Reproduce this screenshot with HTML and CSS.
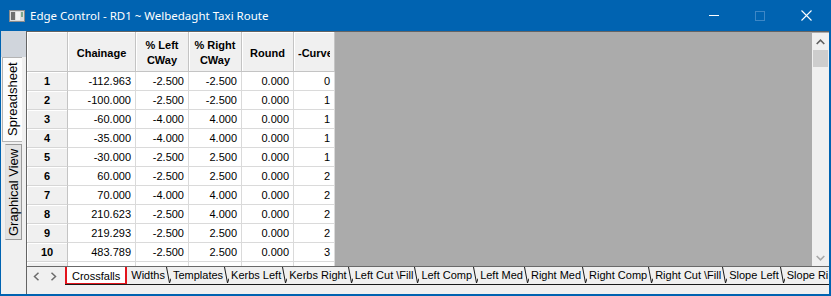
FILE: index.html
```html
<!DOCTYPE html>
<html lang="en">
<head>
  <meta charset="UTF-8">
  <title>Edge Control</title>
  <link rel="stylesheet" href="styles.css">
</head>
<body>
  <div class="window">
    <div class="titlebar">
      <svg class="app-icon" width="16" height="12" viewBox="0 0 16 12">
        <rect x="0.5" y="0.5" width="15" height="11" fill="#dcdcdc" stroke="#8c8c8c"/>
        <rect x="2" y="2" width="4" height="8" fill="#6f6f6f"/>
        <rect x="7" y="2" width="4" height="8" fill="#f4f4f4"/>
        <rect x="12" y="2" width="2" height="5" fill="#7fa88c"/>
      </svg>
      <span class="title">Edge Control - RD1 ~ Welbedaght Taxi Route</span>
      <div class="controls">
        <span class="ctl"><svg width="10" height="1"><rect width="10" height="1" fill="#fff"/></svg></span>
        <span class="ctl"><svg width="10" height="10"><rect x="0.5" y="0.5" width="9" height="9" fill="none" stroke="#3d87c6"/></svg></span>
        <span class="ctl"><svg width="11" height="11"><path d="M0.5 0.5 L10.5 10.5 M10.5 0.5 L0.5 10.5" stroke="#fff" stroke-width="1.1"/></svg></span>
      </div>
    </div>

    <div class="client">
      <div class="side">
        <div class="side-top"></div>
        <div class="vtab active">Spreadsheet</div>
        <div class="vtab">Graphical View</div>
      </div>

      <div class="sheet">
        <div class="grid-area">
          <table class="grid">
            <colgroup>
              <col style="width:41px"><col style="width:68px"><col style="width:53px">
              <col style="width:53px"><col style="width:52px"><col style="width:41px">
            </colgroup>
            <thead>
              <tr>
                <th class="corner"></th>
                <th>Chainage</th>
                <th>% Left<br>CWay</th>
                <th>% Right<br>CWay</th>
                <th>Round</th>
                <th class="cut"><span>-Curve</span></th>
              </tr>
            </thead>
            <tbody>
              <tr><th>1</th><td>-112.963</td><td>-2.500</td><td>-2.500</td><td>0.000</td><td>0</td></tr>
              <tr><th>2</th><td>-100.000</td><td>-2.500</td><td>-2.500</td><td>0.000</td><td>1</td></tr>
              <tr><th>3</th><td>-60.000</td><td>-4.000</td><td>4.000</td><td>0.000</td><td>1</td></tr>
              <tr><th>4</th><td>-35.000</td><td>-4.000</td><td>4.000</td><td>0.000</td><td>1</td></tr>
              <tr><th>5</th><td>-30.000</td><td>-2.500</td><td>2.500</td><td>0.000</td><td>1</td></tr>
              <tr><th>6</th><td>60.000</td><td>-2.500</td><td>2.500</td><td>0.000</td><td>2</td></tr>
              <tr><th>7</th><td>70.000</td><td>-4.000</td><td>4.000</td><td>0.000</td><td>2</td></tr>
              <tr><th>8</th><td>210.623</td><td>-2.500</td><td>4.000</td><td>0.000</td><td>2</td></tr>
              <tr><th>9</th><td>219.293</td><td>-2.500</td><td>2.500</td><td>0.000</td><td>2</td></tr>
              <tr><th>10</th><td>483.789</td><td>-2.500</td><td>2.500</td><td>0.000</td><td>3</td></tr>
              <tr><th></th><td></td><td></td><td></td><td></td><td></td></tr>
            </tbody>
          </table>
          <div class="empty"></div>
          <div class="vscroll">
            <div class="sb-btn"><svg width="9" height="6"><path d="M0.7 5 L4.5 1.2 L8.3 5" fill="none" stroke="#606060" stroke-width="1.6"/></svg></div>
            <div class="sb-thumb"></div>
            <div class="sb-track"></div>
            <div class="sb-btn"><svg width="9" height="6"><path d="M0.7 1 L4.5 4.8 L8.3 1" fill="none" stroke="#a8a8a8" stroke-width="1.6"/></svg></div>
          </div>
        </div>

        <div class="tabstrip">
          <div class="nav">
            <svg width="7" height="9"><path d="M5.5 0.8 L1.5 4.5 L5.5 8.2" fill="none" stroke="#6b6b6b" stroke-width="1.5"/></svg>
            <svg width="7" height="9"><path d="M1.5 0.8 L5.5 4.5 L1.5 8.2" fill="none" stroke="#6b6b6b" stroke-width="1.5"/></svg>
          </div>
          <div class="tabs">
            <span class="tab active">Crossfalls</span>
            <span class="tab">Widths</span>
            <svg class="sep" width="5" height="17"><path d="M0.5 0 L3.5 16 L5 11.5" fill="none" stroke="#1a1a1a"/></svg>
            <span class="tab">Templates</span>
            <svg class="sep" width="5" height="17"><path d="M0.5 0 L3.5 16 L5 11.5" fill="none" stroke="#1a1a1a"/></svg>
            <span class="tab">Kerbs Left</span>
            <svg class="sep" width="5" height="17"><path d="M0.5 0 L3.5 16 L5 11.5" fill="none" stroke="#1a1a1a"/></svg>
            <span class="tab">Kerbs Right</span>
            <svg class="sep" width="5" height="17"><path d="M0.5 0 L3.5 16 L5 11.5" fill="none" stroke="#1a1a1a"/></svg>
            <span class="tab">Left Cut \Fill</span>
            <svg class="sep" width="5" height="17"><path d="M0.5 0 L3.5 16 L5 11.5" fill="none" stroke="#1a1a1a"/></svg>
            <span class="tab">Left Comp</span>
            <svg class="sep" width="5" height="17"><path d="M0.5 0 L3.5 16 L5 11.5" fill="none" stroke="#1a1a1a"/></svg>
            <span class="tab">Left Med</span>
            <svg class="sep" width="5" height="17"><path d="M0.5 0 L3.5 16 L5 11.5" fill="none" stroke="#1a1a1a"/></svg>
            <span class="tab">Right Med</span>
            <svg class="sep" width="5" height="17"><path d="M0.5 0 L3.5 16 L5 11.5" fill="none" stroke="#1a1a1a"/></svg>
            <span class="tab">Right Comp</span>
            <svg class="sep" width="5" height="17"><path d="M0.5 0 L3.5 16 L5 11.5" fill="none" stroke="#1a1a1a"/></svg>
            <span class="tab">Right Cut \Fill</span>
            <svg class="sep" width="5" height="17"><path d="M0.5 0 L3.5 16 L5 11.5" fill="none" stroke="#1a1a1a"/></svg>
            <span class="tab">Slope Left</span>
            <svg class="sep" width="5" height="17"><path d="M0.5 0 L3.5 16 L5 11.5" fill="none" stroke="#1a1a1a"/></svg>
            <span class="tab">Slope Ri</span>
          </div>
        </div>
        <div class="sheet-foot"></div>
      </div>
    </div>
  </div>
</body>
</html>
```

FILE: styles.css
```css
body {
  margin: 0;
  font-family: "Liberation Sans", Arial, sans-serif;
  color: #000;
}

.window {
  width: 831px;
  height: 296px;
  box-sizing: border-box;
  padding: 0 2px 2px 1px;
  background: #0063b1;
  display: flex;
  flex-direction: column;
  overflow: hidden;
}

/* title bar */
.titlebar {
  height: 31px;
  flex: none;
  display: flex;
  align-items: center;
  color: #fff;
}

.app-icon {
  margin-left: 8px;
  margin-top: 1px;
}

.title {
  margin-left: 5px;
  font-family: "Noto Sans", sans-serif;
  font-size: 11.5px;
}

.controls {
  margin-left: auto;
  display: flex;
  height: 100%;
}

.ctl {
  width: 46px;
  display: flex;
  align-items: center;
  justify-content: center;
}

/* client */
.client {
  flex: 1;
  min-height: 0;
  display: flex;
  background: #f0f0f0;
}

.side {
  width: 25px;
  flex: none;
  display: flex;
  flex-direction: column;
}

.side-top {
  height: 26px;
  background: #d0d5dc;
}

.vtab {
  writing-mode: vertical-rl;
  transform: rotate(180deg);
  font-size: 13px;
  display: flex;
  align-items: center;
  justify-content: center;
  box-sizing: border-box;
  width: 17px;
  height: 96px;
  margin-left: 4px;
  margin-top: 2px;
  background: #e3e3e3;
  border: 1px solid #9a9a9a;
  border-right-color: #dcdcdc;
}

.vtab.active {
  width: 20px;
  height: 85px;
  margin-left: 1px;
  margin-top: 0;
  background: #fcfcfc;
  border-color: #b4b4b4;
  border-left: none;
}

.sheet {
  flex: 1;
  min-width: 0;
  display: flex;
  flex-direction: column;
  border-left: 1px solid #646464;
  border-top: 1px solid #646464;
}

.grid-area {
  height: 234px;
  flex: none;
  display: flex;
  background: #ababab;
  overflow: hidden;
}

/* spreadsheet */
.grid {
  flex: none;
  table-layout: fixed;
  border-collapse: separate;
  border-spacing: 0;
  width: 308px;
  font-size: 11px;
  background: #fff;
}

.grid th,
.grid td {
  box-sizing: border-box;
  padding: 0;
  height: 19px;
  line-height: 18px;
  white-space: nowrap;
  overflow: hidden;
}

.grid td {
  text-align: right;
  padding-right: 4px;
  border-right: 1px solid #dadada;
  border-bottom: 1px solid #dadada;
}

.grid th {
  background: #f0f0f0;
  font-weight: bold;
  text-align: center;
  border-right: 1px solid #c4c4c4;
  border-bottom: 1px solid #d6d6d6;
  box-shadow: inset 1px 1px #fff;
}

.grid thead th {
  height: 40px;
  line-height: 15px;
  padding-top: 3px;
  border-bottom-color: #c4c4c4;
}

.grid thead th.cut {
  text-align: left;
  padding-left: 4px;
}

.grid thead th.cut span {
  display: block;
  width: 32px;
  overflow: hidden;
}

.empty {
  flex: 1;
}

/* vertical scrollbar */
.vscroll {
  width: 17px;
  flex: none;
  display: flex;
  flex-direction: column;
  background: #f0f0f0;
  margin-top: 1px;
}

.sb-btn {
  height: 17px;
  display: flex;
  align-items: center;
  justify-content: center;
}

.sb-thumb {
  height: 17px;
  margin: 0 1px;
  background: #cdcdcd;
}

.sb-track {
  flex: 1;
}

/* sheet tabs */
.tabstrip {
  height: 18px;
  flex: none;
  display: flex;
  border-top: 1px solid #696969;
  font-size: 11px;
}

.nav {
  width: 38px;
  flex: none;
  display: flex;
  align-items: center;
  gap: 10px;
  padding-left: 6px;
  box-sizing: border-box;
}

.tabs {
  flex: 1;
  display: flex;
  overflow: hidden;
  border-bottom: 1px solid #1a1a1a;
  height: 17px;
}

.tab {
  flex: none;
  padding: 0 1px 0 2px;
  line-height: 17px;
  white-space: nowrap;
}

.tab.active {
  position: relative;
  top: -3px;
  height: 21px;
  box-sizing: border-box;
  padding: 1px 5px 0 5px;
  margin-right: 2px;
  border: 2px solid #e3141c;
  background: #fff;
  line-height: 18px;
}

.sep {
  flex: none;
  display: block;
}

.sheet-foot {
  flex: 1;
}
```
